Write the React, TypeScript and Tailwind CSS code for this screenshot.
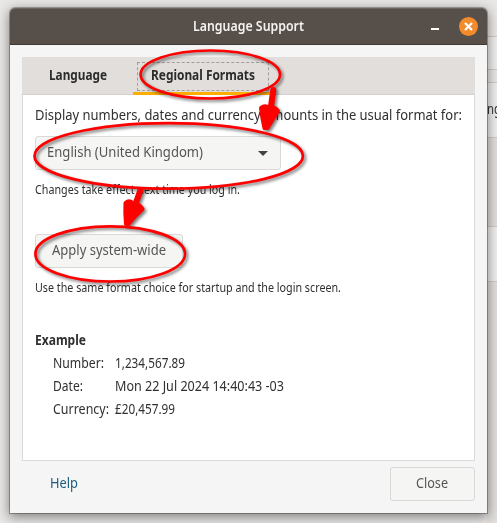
import { useLayoutEffect, useRef, useState } from "react";

function Fit({ w, cls = "", children }: { w: number; cls?: string; children: string }) {
  const ref = useRef<HTMLSpanElement>(null);
  const [scale, setScale] = useState(1);
  useLayoutEffect(() => {
    if (ref.current && ref.current.offsetWidth) setScale(w / ref.current.getBoundingClientRect().width);
  }, []);
  return (
    <div className={`shrink-0 ${cls}`} style={{ width: w }}>
      <span ref={ref} className="inline-block origin-left whitespace-nowrap" style={{ transform: `scaleX(${scale})` }}>
        {children}
      </span>
    </div>
  );
}

function Row({ label, lw, value, vw }: { label: string; lw: number; value: string; vw: number }) {
  return (
    <div className="flex h-[23px] pl-[18px]">
      <div className="w-[62px]"><Fit w={lw}>{label}</Fit></div>
      <Fit w={vw}>{value}</Fit>
    </div>
  );
}

function Annotations() {
  return (
    <svg className="pointer-events-none absolute inset-0" width="497" height="523" viewBox="0 0 497 523" fill="none">
      <g stroke="#fe0000" strokeWidth="2.7" className="drop-shadow-[2px_2px_1.5px_rgba(0,0,0,0.5)]">
        <ellipse cx="210.3" cy="74.5" rx="69.7" ry="24" />
        <ellipse cx="168.7" cy="155.9" rx="134.2" ry="32.8" />
        <ellipse cx="110.2" cy="253.9" rx="74.8" ry="27.6" />
        <g fill="#fe0000" strokeLinejoin="round" strokeLinecap="round">
          <path d="M273.300 90L270.500 110" strokeWidth="6" />
          <path d="M261 108Q265 104.500 269 108Q275 106.500 278 111Q273 119 267.500 128L264.500 128Q262 117 261 108Z" strokeWidth="4" />
          <path d="M140.500 190L135.500 204" strokeWidth="6" />
          <path d="M125.500 203Q129.500 199.500 133.500 204Q139.500 203.500 142.500 209Q135 216 128.500 224L126 224Q125 213 125.500 203Z" strokeWidth="4" />
        </g>
      </g>
    </svg>
  );
}

export default function App() {
  return (
    <div className="relative h-[523px] w-[497px] overflow-hidden bg-[#e9e7e5] font-['Noto_Sans','Open_Sans',sans-serif] text-[14px] leading-5 text-[#303030]">
      <div className="ml-auto flex h-full w-[10px] flex-col">
        <div className="h-[37px] border-b border-[#cfcac6]" />
        <div className="h-[33px] border-b border-[#cfcac6] bg-[#efeeed]" />
        <div className="h-[13px] border-b border-[#cfcac6]" />
        <div className="h-[55px] border-b border-[#cfcac6] bg-[#efeeed] pt-[16px]"><Fit w={14}>ng</Fit></div>
        <div className="h-[89px] border-b border-[#cfcac6] bg-[#e1dedb]" />
        <div className="h-[55px] border-b border-[#cfcac6] bg-[#efeeed]" />
        <div className="grow bg-[#e1dedb]" />
      </div>
      <div className="absolute top-[8px] left-[10px] flex h-[505px] w-[477px] flex-col rounded-t-[5px] bg-[#f5f5f5] shadow-[0_0_0_1px_rgba(0,0,0,0.28),0_3px_12px_1px_rgba(0,0,0,0.45)]">
        <header className="flex h-[37px] shrink-0 items-center rounded-t-[5px] border-t border-b border-t-[#6c645e] border-b-[#403832] bg-[#574f4a] pr-[9px] pl-[183px] font-semibold text-[#f4f2f0]">
          <Fit w={111} cls="-mt-px">Language Support</Fit>
          <div className="mt-[5px] ml-[127px] h-[2px] w-[8px] bg-white" />
          <div className="-mt-px ml-auto flex size-[19px] items-center justify-center rounded-full bg-[#f28b2c]">
            <svg width="9" height="9" viewBox="0 0 9 9" stroke="white" strokeWidth="2.2"><path d="M1 1L8 8M8 1L1 8" /></svg>
          </div>
        </header>
        <main className="mx-[12px] mt-[12px] h-[404px] shrink-0 border border-[#dbdad9] bg-white">
          <nav className="-mx-px -mt-px flex h-[38px] border-b border-[#d5d1ce] bg-[#e1dedb] font-bold text-[#2c2c2c]">
            <div className="w-[111px] pt-[8px] pl-[27px]"><Fit w={58}>Language</Fit></div>
            <div className="h-[38px] w-[140px] border-b-[3px] border-[#fdae03] pt-[5px] pl-[4px]">
              <div className="h-[29px] w-[132px] border border-dashed border-[#a09e9c] pt-[2px] pl-[13px]"><Fit w={104}>Regional Formats</Fit></div>
            </div>
          </nav>
          <section className="flex flex-col pt-[10px] pl-[12px]">
            <Fit w={427}>Display numbers, dates and currency amounts in the usual format for:</Fit>
            <div className="mt-[11px] flex h-[34px] w-[246px] items-center rounded-[3px] border border-[#d9d9d7] bg-[#f5f5f4] pr-[12px] pb-[2px] pl-[11px] text-[#555]">
              <Fit w={156}>English (United Kingdom)</Fit>
              <svg className="mt-[2px] ml-auto" width="10" height="5" viewBox="0 0 10 5"><path d="M0 0H10L5 5Z" fill="#444" /></svg>
            </div>
            <Fit w={205} cls="mt-[12px] text-[12px] leading-4">Changes take effect next time you log in.</Fit>
            <div className="mt-[36px] flex h-[34px] w-[148px] items-center rounded-[3px] border border-[#d9d9d7] bg-[#f5f5f4] pb-[2px] pl-[16px] text-[#555]">
              <Fit w={114}>Apply system-wide</Fit>
            </div>
            <Fit w={306} cls="mt-[12px] text-[12px] leading-4">Use the same format choice for startup and the login screen.</Fit>
            <Fit w={51} cls="mt-[34px] mb-[3px] font-bold">Example</Fit>
            <Row label="Number:" lw={51} value="1,234,567.89" vw={70} />
            <Row label="Date:" lw={30} value="Mon 22 Jul 2024 14:40:43 -03" vw={169} />
            <Row label="Currency:" lw={56} value="£20,457.99" vw={60} />
          </section>
        </main>
        <footer className="mt-[6px] flex justify-between pr-[12px] pl-[40px]">
          <Fit w={28} cls="mt-[6px] text-[#1b5d80]">Help</Fit>
          <button className="flex h-[34px] w-[85px] items-center rounded-[3px] border border-[#d9d9d7] bg-[#f5f5f4] pb-[2px] pl-[25px] text-[#555]">
            <Fit w={32}>Close</Fit>
          </button>
        </footer>
      </div>
      <Annotations />
    </div>
  );
}
